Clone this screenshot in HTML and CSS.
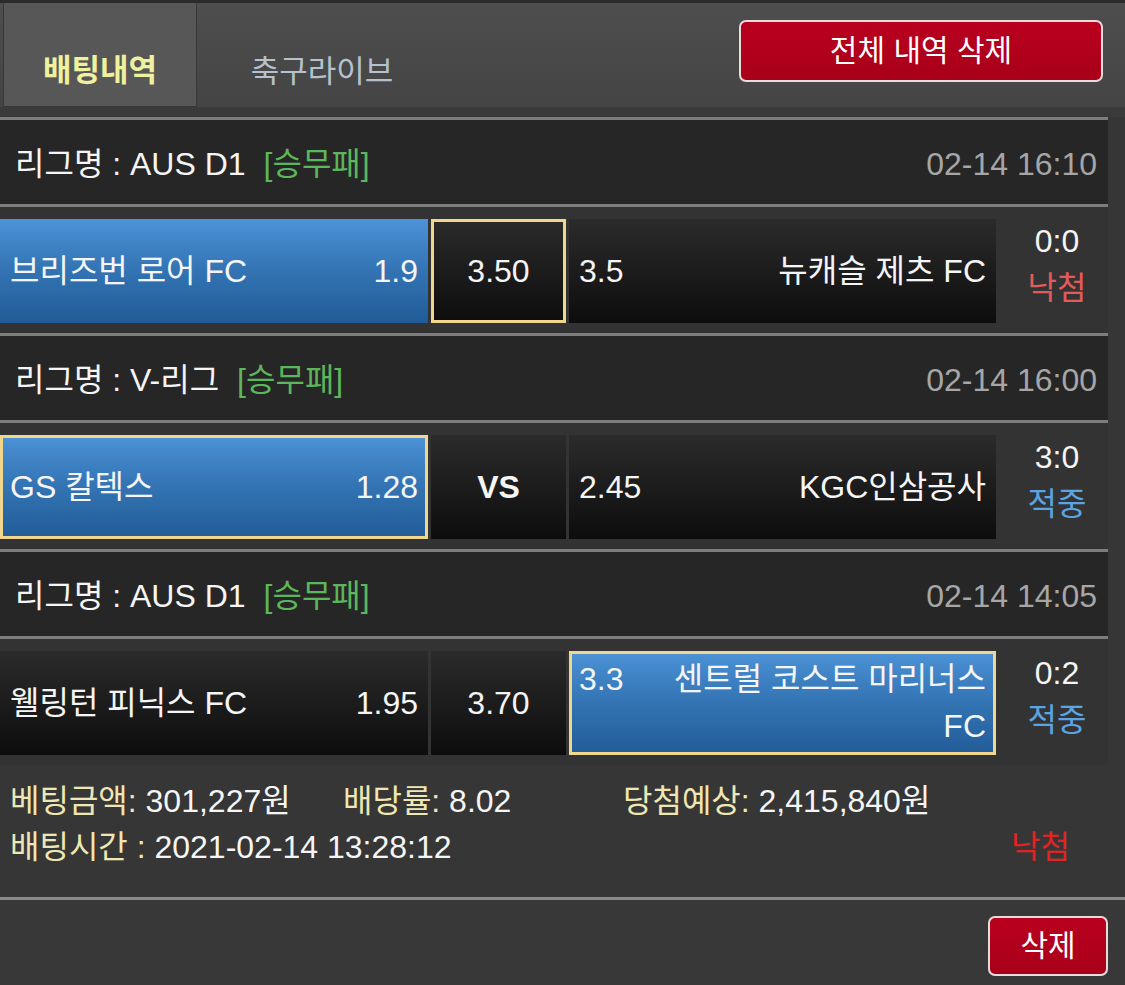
FILE: index.html
```html
<!DOCTYPE html>
<html lang="ko">
<head>
<meta charset="utf-8">
<title>배팅내역</title>
<link rel="stylesheet" href="styles.css">
</head>
<body>
<header class="topbar">
  <div class="topbar-row">
    <nav class="tabs">
      <div class="tab active">배팅내역</div>
      <div class="tab live">축구라이브</div>
    </nav>
    <button class="btn-red btn-all">전체 내역 삭제</button>
  </div>
</header>

<div class="list">
  <section class="game">
    <div class="league"><span class="lname">리그명 : AUS D1</span><span class="ltype">[승무패]</span><span class="date">02-14 16:10</span></div>
    <div class="match">
      <div class="cell home blue"><span class="team">브리즈번 로어 FC</span><span class="odd">1.9</span></div>
      <div class="cell draw dark pick">3.50</div>
      <div class="cell away dark"><div class="inner"><span class="odd">3.5</span><span class="team">뉴캐슬 제츠 FC</span></div></div>
      <div class="score"><span>0:0</span><span class="lose">낙첨</span></div>
    </div>
  </section>

  <section class="game">
    <div class="league"><span class="lname">리그명 : V-리그</span><span class="ltype">[승무패]</span><span class="date">02-14 16:00</span></div>
    <div class="match">
      <div class="cell home blue pick"><span class="team">GS 칼텍스</span><span class="odd">1.28</span></div>
      <div class="cell draw dark vs">VS</div>
      <div class="cell away dark"><div class="inner"><span class="odd">2.45</span><span class="team">KGC인삼공사</span></div></div>
      <div class="score"><span>3:0</span><span class="win">적중</span></div>
    </div>
  </section>

  <section class="game">
    <div class="league"><span class="lname">리그명 : AUS D1</span><span class="ltype">[승무패]</span><span class="date">02-14 14:05</span></div>
    <div class="match">
      <div class="cell home dark"><span class="team">웰링턴 피닉스 FC</span><span class="odd">1.95</span></div>
      <div class="cell draw dark">3.70</div>
      <div class="cell away blue pick"><div class="inner"><span class="odd">3.3</span><span class="team wide">센트럴 코스트 마리너스 FC</span></div></div>
      <div class="score"><span>0:2</span><span class="win">적중</span></div>
    </div>
  </section>
</div>

<div class="summary">
  <div class="sum-row">
    <div class="item w1"><span class="label">베팅금액:</span> 301,227원</div>
    <div class="item w2"><span class="label">배당률:</span> 8.02</div>
    <div class="item"><span class="label">당첨예상:</span> 2,415,840원</div>
  </div>
  <div class="sum-row">
    <div class="item"><span class="label">배팅시간 :</span> 2021-02-14 13:28:12</div>
    <div class="item result-lose">낙첨</div>
  </div>
</div>

<footer class="footer">
  <button class="btn-red btn-del">삭제</button>
</footer>
</body>
</html>
```

FILE: styles.css
```css
* {
  box-sizing: border-box;
  margin: 0;
  padding: 0;
}

body {
  width: 1125px;
  height: 985px;
  overflow: hidden;
  background: #363636;
  color: #f5f5f5;
  font-family: "Liberation Sans", "Noto Sans CJK KR", sans-serif;
  font-size: 32px;
  line-height: 47px;
}

/* ---------- top bar ---------- */
.topbar {
  height: 117px;
  border-top: 3px solid #2b2b2b;
  background: #3a3a3a;
  padding-bottom: 10px;
}

.topbar-row {
  height: 104px;
  display: flex;
  justify-content: space-between;
  background: linear-gradient(#4e4e4e, #444444);
}

.tabs {
  display: flex;
}

.tab {
  display: flex;
  align-items: flex-end;
  justify-content: center;
  padding-bottom: 12px;
  font-size: 31px;
}

.tab.active {
  width: 194px;
  margin-left: 3px;
  background: #575757;
  border: 1px solid #383838;
  border-top: none;
  color: #eff19f;
  font-weight: bold;
}

.tab.live {
  width: 250px;
  color: #b5c1cd;
}

.btn-red {
  font-family: inherit;
  color: #ffffff;
  background: linear-gradient(#b9001f, #a90019);
  border: 2px solid #e9dcdc;
  border-radius: 7px;
  font-size: 30px;
  line-height: 1;
  cursor: pointer;
}

.btn-all {
  width: 364px;
  height: 62px;
  margin-top: 17px;
  margin-right: 22px;
}

/* ---------- list ---------- */
.list {
  margin-right: 17px;
}

.league {
  display: flex;
  align-items: center;
  height: 87px;
  padding: 4px 11px 0 15px;
  border-top: 3px solid #7d7d7d;
  background: #262626;
}

.ltype {
  margin-left: 18px;
  color: #5cb65b;
}

.date {
  margin-left: auto;
  color: #a6a6a6;
}

.match {
  display: flex;
  height: 129px;
  padding: 12px 0 10px;
  border-top: 3px solid #7d7d7d;
  background: #333333;
}

.cell {
  height: 104px;
  display: flex;
  align-items: center;
  padding: 0 10px;
}

.home {
  width: 428px;
  justify-content: space-between;
}

.draw {
  width: 135px;
  margin-left: 3px;
  justify-content: center;
}

.away {
  width: 427px;
  margin-left: 3px;
}

.inner {
  flex: 1;
  display: flex;
  align-items: baseline;
  justify-content: space-between;
}

.inner .team {
  text-align: right;
  margin-left: 40px;
}

.team.wide {
  max-width: 320px;
}

.blue {
  background: linear-gradient(#4c93d7 0%, #3576b6 45%, #215b97 100%);
}

.dark {
  background: linear-gradient(#2b2b2b, #0d0d0d);
}

.pick {
  box-shadow: inset 0 0 0 3px #f1d68d;
}

.vs {
  font-weight: bold;
}

.score {
  flex: 1;
  display: flex;
  flex-direction: column;
  align-items: center;
  justify-content: center;
  padding: 0 0 13px 10px;
}

.lose {
  color: #e35a5a;
}

.win {
  color: #5ca3e2;
}

/* ---------- summary ---------- */
.summary {
  height: 132px;
  padding: 13px 55px 0 10px;
  line-height: 46px;
}

.sum-row {
  display: flex;
}

.item.w1 {
  width: 333px;
}

.item.w2 {
  width: 280px;
}

.label {
  color: #efe7b3;
}

.result-lose {
  margin-left: auto;
  color: #e02424;
}

/* ---------- footer ---------- */
.footer {
  height: 88px;
  display: flex;
  justify-content: flex-end;
  padding: 16px 17px 0 0;
  border-top: 3px solid #8a8a8a;
  background: #383838;
}

.btn-del {
  width: 120px;
  height: 60px;
}
```
